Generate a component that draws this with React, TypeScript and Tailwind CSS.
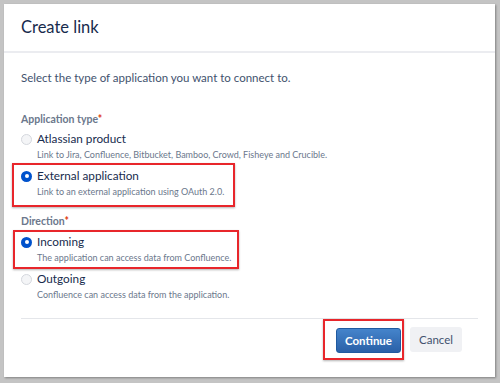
import React from "react";

type Option = { label: string; desc: string; checked?: boolean };

const Radio: React.FC<{ checked?: boolean }> = ({ checked }) =>
  checked ? (
    <span className="flex h-[11px] w-[11px] shrink-0 items-center justify-center rounded-full bg-[#0052cc]">
      <span className="h-[4px] w-[4px] rounded-full bg-white" />
    </span>
  ) : (
    <span className="h-[11px] w-[11px] shrink-0 rounded-full border-[1.5px] border-[#d5d8de] bg-[#f4f5f7]" />
  );

const RadioItem: React.FC<Option> = ({ label, desc, checked }) => (
  <div>
    <div className="flex h-[18px] items-center gap-[5px]">
      <Radio checked={checked} />
      <span className="whitespace-nowrap text-[11.75px] text-[#172b4d]">{label}</span>
    </div>
    <p className="mt-[1px] whitespace-nowrap pl-[16px] text-[9px] leading-[12px] text-[#6b778c]">{desc}</p>
  </div>
);

const Marked: React.FC<{ className: string; children: React.ReactNode }> = ({ className, children }) => (
  <div className={`border-2 border-[#e8262b] shadow-[0_1px_2px_rgba(0,0,0,0.3)] ${className}`}>{children}</div>
);

export default function App() {
  return (
    <div
      className="h-[383px] w-[500px] bg-[#c4c4c4] pl-[4px] pt-[4px]"
      style={{ fontFamily: 'Lato, "Open Sans", sans-serif' }}
    >
      <div className="flex h-[373px] w-[491px] flex-col bg-white shadow-[1px_1px_2px_rgba(0,0,0,0.35)]">
        <div className="flex h-[49px] shrink-0 items-center border-b-2 border-[#ebecf0] px-[17px]">
          <h1 className="text-[16.5px] text-[#172b4d]">Create link</h1>
        </div>

        <div className="shrink-0 px-[17px] pt-[17px]">
          <p className="whitespace-nowrap text-[11.5px] leading-[16px] text-[#42526e]">
            Select the type of application you want to connect to.
          </p>

          <div className="mt-[26px] text-[10.5px] font-bold leading-[14px] text-[#6b778c]">
            Application type<span className="text-[#de350b]">*</span>
          </div>
          <div className="mt-[4px]">
            <RadioItem
              label="Atlassian product"
              desc="Link to Jira, Confluence, Bitbucket, Bamboo, Crowd, Fisheye and Crucible."
            />
          </div>
          <Marked className="-ml-[9px] mt-[2px] w-[223px] pb-[7px] pl-[7px] pt-[2px]">
            <RadioItem label="External application" desc="Link to an external application using OAuth 2.0." checked />
          </Marked>

          <div className="mt-[7px] text-[10.5px] font-bold leading-[14px] text-[#6b778c]">
            Direction<span className="text-[#de350b]">*</span>
          </div>
          <Marked className="-ml-[8px] mt-[2px] w-[226px] pb-[3px] pl-[6px] pt-[1px]">
            <RadioItem label="Incoming" desc="The application can access data from Confluence." checked />
          </Marked>
          <div className="mt-[1px]">
            <RadioItem label="Outgoing" desc="Confluence can access data from the application." />
          </div>
        </div>

        <div className="mx-[17px] mt-[17px] shrink-0 border-t border-[#e4e6ea]" />
        <div className="flex shrink-0 items-start justify-end gap-[6px] pr-[33px]">
          <Marked className="pb-[5px] pl-[11px] pr-[1px] pt-[6px]">
            <button className="h-[25px] rounded-[3px] border border-[#1f5aa0] bg-gradient-to-b from-[#4584cb] to-[#2a61a8] px-[8px] text-[11.5px] font-bold text-white">
              Continue
            </button>
          </Marked>
          <button className="mt-[8px] h-[25px] rounded-[3px] bg-[#f0f1f4] px-[9px] text-[11.5px] text-[#42526e]">
            Cancel
          </button>
        </div>
      </div>
    </div>
  );
}
